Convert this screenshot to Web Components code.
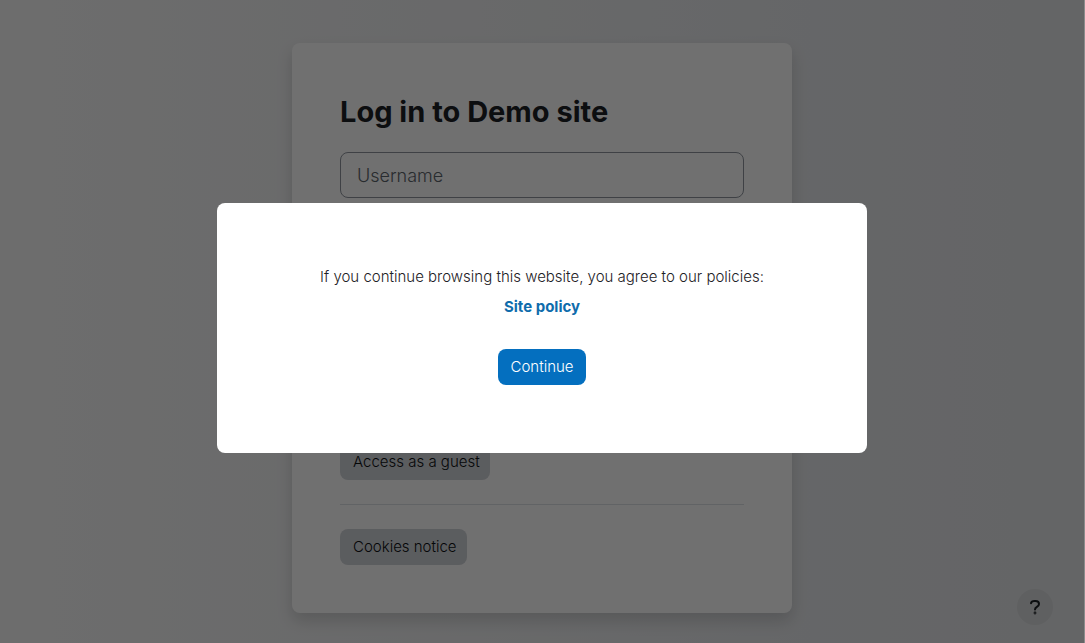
<!DOCTYPE html>
<html lang="en">
<head>
<meta charset="utf-8">
<meta name="viewport" content="width=device-width, initial-scale=1">
<title>Log in to Demo site</title>
<style>
html, body { margin: 0; min-height: 100%; }
body { font: 300 15px/24px Inter, "Liberation Sans", sans-serif; color: #1d2125; }
</style>
</head>
<body>
<login-page>
  <login-card heading="Log in to Demo site">
    <text-field label="Username" type="text"></text-field>
    <text-field type="password"></text-field>
    <action-button slot="guest">Access as a guest</action-button>
    <action-button slot="footer">Cookies notice</action-button>
  </login-card>
  <help-button slot="float"></help-button>
</login-page>
<policy-dialog>
  <span>If you continue browsing this website, you agree to our policies:</span>
  <policy-link slot="link">Site policy</policy-link>
  <action-button slot="action" variant="primary">Continue</action-button>
</policy-dialog>

<script>
const define = (name, html, setup) => customElements.define(name, class extends HTMLElement {
  connectedCallback() {
    if (this.shadowRoot) return;
    const template = document.createElement('template');
    template.innerHTML = html;
    this.attachShadow({ mode: 'open' }).append(template.content.cloneNode(true));
    if (setup) setup(this, this.shadowRoot);
  }
});

define('login-page', `
<style>
:host { display: block; box-sizing: border-box; min-height: 100vh; background: linear-gradient(to right, #f8f8f8, #e7e9ec 75%, #e3e5e8); border-right: 1px solid #f8f9fa; }
main { display: flex; justify-content: center; padding: 43px 16px 30px; }
</style>
<main><slot></slot></main>
<slot name="float"></slot>`);

define('login-card', `
<style>
:host { display: block; box-sizing: border-box; width: 100%; max-width: 500px; padding: 48px; background: #fff; border-radius: 8px; box-shadow: 0 8px 16px rgba(0, 0, 0, .15); }
h1 { margin: 0 0 19px; font-size: 29px; line-height: 42px; font-weight: 700; }
.fields { display: grid; gap: 16px; padding-bottom: 184px; }
hr { margin: 24px 0; border: 0; border-top: 1px solid #dee2e6; }
</style>
<h1></h1>
<div class="fields"><slot></slot></div>
<slot name="guest"></slot>
<hr>
<slot name="footer"></slot>`, (host, root) => {
  root.querySelector('h1').textContent = host.getAttribute('heading');
});

define('text-field', `
<style>
:host { display: block; }
input { display: block; box-sizing: border-box; width: 100%; height: 46px; margin: 0; padding: 8px 16px; font: 300 18px/28px Inter, "Liberation Sans", sans-serif; color: #495057; background: #fff; border: 1px solid #8f959e; border-radius: 8px; }
input::placeholder { color: #5c646b; opacity: 1; }
</style>
<input>`, (host, root) => {
  const input = root.querySelector('input');
  input.type = host.getAttribute('type');
  input.placeholder = host.getAttribute('label') || '';
  input.setAttribute('aria-label', host.getAttribute('label') || 'Password');
});

define('action-button', `
<style>
:host { display: block; }
button { display: block; height: 36px; margin: 0; padding: 0 10px 0 13px; font: inherit; color: #0d1013; background: #d0d3d8; border: 0; border-radius: 8px; cursor: pointer; }
:host([variant="primary"]) button { padding: 0 13px; color: #fff; background: #046fbf; }
</style>
<button type="button"><slot></slot></button>`);

define('help-button', `
<style>
:host { position: fixed; right: 32px; bottom: 18px; display: block; }
button { display: grid; place-items: center; width: 36px; height: 36px; padding: 0; background: #d8dadc; border: 0; border-radius: 50%; color: #1d2125; cursor: pointer; }
svg { display: block; width: 12px; height: 16px; }
</style>
<button type="button" aria-label="Help"><svg viewBox="0 0 12 16" fill="none" stroke="currentColor" stroke-width="2" stroke-linecap="round" stroke-linejoin="round"><path d="M2 4.3C2.300 2.700 3.500 2 5.500 2h1C8.700 2 10 3.200 10 4.900c0 1.500-.8 2.200-2.100 3C6.600 8.700 6 9.100 6 10.500"/><circle cx="6" cy="14" r=".4"/></svg></button>`);

define('policy-link', `
<style>
:host { display: block; }
a { color: #0f6cac; font-weight: 700; text-decoration: none; }
</style>
<a href="#"><slot></slot></a>`);

define('policy-dialog', `
<style>
:host { position: fixed; inset: 0; display: grid; place-items: center; padding-top: 13px; background: rgba(0, 0, 0, .56); border-right: 1px solid rgba(255, 255, 255, .2); }
section { display: grid; justify-items: center; box-sizing: border-box; width: 100%; max-width: 650px; padding: 62px 24px 68px; background: #fff; border-radius: 8px; color: #1d2125; text-align: center; }
p { margin: 0; line-height: 24px; }
.link { margin-top: 6px; }
.action { margin-top: 30px; }
</style>
<section role="dialog" aria-modal="true" aria-label="Site policy">
  <p><slot></slot></p>
  <div class="link"><slot name="link"></slot></div>
  <div class="action"><slot name="action"></slot></div>
</section>`);
</script>
</body>
</html>
